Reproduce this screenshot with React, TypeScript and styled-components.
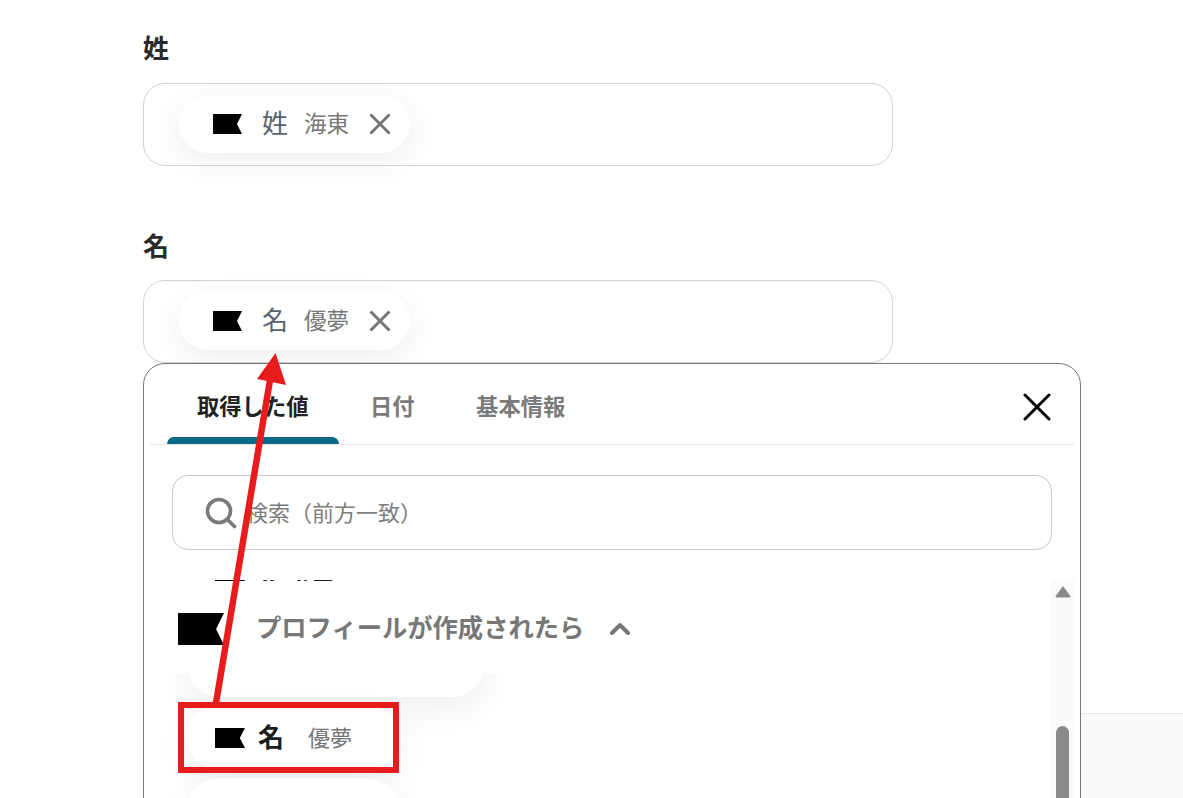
import React from "react";
import styled, { createGlobalStyle } from "styled-components";

const Global = createGlobalStyle`
  html, body { margin: 0; padding: 0; background: #fff; }
  body { font-family: "Noto Sans CJK JP", "Noto Sans", sans-serif; overflow: hidden; }
`;

const Page = styled.div`
  position: relative;
  width: 1183px;
  height: 798px;
  overflow: hidden;
  padding-left: 143px;
  box-sizing: border-box;
  background: #fff;
`;

const FooterBand = styled.div`
  position: absolute;
  left: 143px;
  right: 0;
  top: 713px;
  bottom: 0;
  background: #fafafa;
  border-top: 1px solid #e6e6e6;
`;

const Field = styled.section`
  position: relative;
  width: 750px;
`;

const Label = styled.div<{ $top: number; $after: number }>`
  padding-top: ${(p) => p.$top}px;
  height: 38px;
  font-size: 26px;
  line-height: 38px;
  font-weight: 700;
  color: #2a2a2a;
  margin-bottom: ${(p) => p.$after}px;
`;

const InputBox = styled.div`
  box-sizing: border-box;
  height: 83px;
  padding: 11px 0 0 35px;
  border: 1px solid #cfd2d8;
  border-radius: 22px;
  background: #fff;
`;

const Chip = styled.div`
  display: inline-flex;
  align-items: center;
  box-sizing: border-box;
  height: 58px;
  width: 231px;
  padding-left: 34px;
  border-radius: 29px;
  background: #fff;
  box-shadow: 0 8px 32px rgba(0, 0, 0, 0.07);
`;

const ChipLabel = styled.span`
  width: 26px;
  margin-left: 20px;
  margin-top: -4px;
  font-size: 26px;
  line-height: 1;
  color: #58626c;
`;

const ChipValue = styled.span`
  width: 45px;
  margin-left: 16px;
  margin-top: -4px;
  font-size: 22.5px;
  line-height: 1;
  white-space: nowrap;
  color: #777;
`;

const ChipClose = styled.svg`
  width: 24px;
  height: 24px;
  margin-left: 19px;
  stroke: #777;
  stroke-width: 3;
  fill: none;
`;

const Panel = styled.div`
  position: relative;
  z-index: 1;
  box-sizing: border-box;
  width: 938px;
  height: 520px;
  padding: 0 6px;
  display: flex;
  flex-direction: column;
  border: 1px solid #777;
  border-radius: 22px;
  background: #fff;
`;

const TabBar = styled.div`
  flex: none;
  height: 81px;
  box-sizing: border-box;
  padding-left: 17px;
  display: flex;
  align-items: stretch;
  border-bottom: 1px solid #e4e4e4;
`;

const Tab = styled.div<{ $active?: boolean }>`
  box-sizing: border-box;
  height: 80px;
  padding: 9px 30px 0;
  line-height: 64px;
  margin-right: 1.5px;
  font-size: 22.3px;
  font-weight: 700;
  white-space: nowrap;
  color: ${(p) => (p.$active ? "#222" : "#7a7a7a")};

  &::after {
    content: "";
    display: block;
    height: 7px;
    border-radius: 8px 8px 0 0;
    margin: 0 -30px;
    background: ${(p) => (p.$active ? "#0b6a85" : "transparent")};
  }
`;

const PanelClose = styled.svg`
  margin-left: auto;
  align-self: center;
  margin-right: 23px;
  margin-top: 6px;
  width: 28px;
  height: 28px;
  stroke: #000;
  stroke-width: 3;
  stroke-linecap: round;
  fill: none;
`;

const SearchBox = styled.div`
  flex: none;
  box-sizing: border-box;
  height: 75px;
  margin: 30px 22px 30px;
  padding-left: 32px;
  display: flex;
  align-items: center;
  border: 1px solid #c9c9c9;
  border-radius: 16px;
`;

const SearchIcon = styled.svg`
  width: 32px;
  height: 32px;
  stroke: #7a7a7a;
  stroke-width: 3.6;
  stroke-linecap: round;
  fill: none;
`;

const Placeholder = styled.span`
  margin-left: 9px;
  margin-top: -3px;
  font-size: 22px;
  color: #7d7d7d;
  white-space: nowrap;
`;

const ListRow = styled.div`
  flex: 1;
  min-height: 0;
  display: flex;
`;

const List = styled.div`
  position: relative;
  flex: 1;
  min-width: 0;
  overflow: hidden;
`;

const ChipStack = styled.div`
  display: flex;
  flex-direction: column;
  align-items: flex-start;
  gap: 8px;
  margin-top: -22.5px;
  padding-left: 37px;

  & > :first-child {
    margin-bottom: 1.5px;
  }
`;

const ListChip = styled.div<{ $width: number }>`
  flex: none;
  display: flex;
  align-items: center;
  box-sizing: border-box;
  height: 65px;
  width: ${(p) => p.$width}px;
  padding-left: 28px;
  border-radius: 32px;
  background: #fff;
  box-shadow: 0 10px 36px rgba(0, 0, 0, 0.07);
`;

const ListChipLabel = styled.span`
  margin-left: 13px;
  margin-top: -3px;
  font-size: 26px;
  line-height: 1;
  font-weight: 700;
  color: #1c1c1c;
  white-space: nowrap;
`;

const ListChipValue = styled.span`
  margin-left: 24px;
  margin-top: -3px;
  font-size: 22px;
  line-height: 1;
  color: #777;
  white-space: nowrap;
`;

const GroupHeader = styled.div`
  position: absolute;
  left: 0;
  right: 0;
  top: 1px;
  height: 93px;
  padding-left: 28px;
  display: flex;
  align-items: center;
  background: #fff;
`;

const GroupFlag = styled.span`
  display: flex;
  margin-top: 2px;
`;

const GroupTitle = styled.span`
  margin-left: 32px;
  margin-top: -3px;
  font-size: 25.3px;
  font-weight: 700;
  color: #777;
  white-space: nowrap;
`;

const Chevron = styled.svg`
  width: 24px;
  height: 16px;
  margin-left: 24px;
  margin-top: 1px;
  stroke: #777;
  stroke-width: 4;
  stroke-linecap: round;
  stroke-linejoin: round;
  fill: none;
`;

const ScrollTrack = styled.div`
  flex: none;
  width: 23px;
  background: #fafafa;
  display: flex;
  flex-direction: column;
  align-items: center;
  padding-top: 6px;
  box-sizing: border-box;
`;

const ScrollArrow = styled.svg`
  flex: none;
  width: 16px;
  height: 12px;
  fill: #8a8a8a;
  stroke: #8a8a8a;
  stroke-width: 2;
  stroke-linejoin: round;
`;

const ScrollThumb = styled.div`
  flex: none;
  width: 13px;
  height: 200px;
  margin-top: 128px;
  border-radius: 7px;
  background: #8a8a8a;
`;

const Annotation = styled.svg`
  position: absolute;
  inset: 0;
  z-index: 5;
  width: 1183px;
  height: 798px;
  pointer-events: none;
`;

const Flag = ({ w, h }: { w: number; h: number }) => (
  <svg width={w} height={h} viewBox="0 0 29 20" preserveAspectRatio="none" style={{ flex: "none" }}>
    <path d="M0 0H29L24 10L29 20H0Z" fill="#000" />
  </svg>
);

const Cross = () => (
  <ChipClose viewBox="0 0 24 24">
    <path d="M2.5 2.5L21.5 21.5M21.5 2.5L2.5 21.5" />
  </ChipClose>
);

const TagChip = ({ label, value }: { label: string; value: string }) => (
  <Chip>
    <Flag w={29} h={20} />
    <ChipLabel>{label}</ChipLabel>
    <ChipValue>{value}</ChipValue>
    <Cross />
  </Chip>
);

export default function App() {
  return (
    <Page>
      <Global />
      <FooterBand />
      <Field>
        <Label $top={28} $after={17}>姓</Label>
        <InputBox>
          <TagChip label="姓" value="海東" />
        </InputBox>
      </Field>
      <Field>
        <Label $top={60} $after={16}>名</Label>
        <InputBox>
          <TagChip label="名" value="優夢" />
        </InputBox>
      </Field>
      <Panel>
        <TabBar>
          <Tab $active>取得した値</Tab>
          <Tab>日付</Tab>
          <Tab>基本情報</Tab>
          <PanelClose viewBox="0 0 28 28">
            <path d="M2 2L26 26M26 2L2 26" />
          </PanelClose>
        </TabBar>
        <SearchBox>
          <SearchIcon viewBox="0 0 32 32">
            <circle cx="14" cy="14" r="11.5" />
            <path d="M23 23L29.5 29.5" />
          </SearchIcon>
          <Placeholder>検索（前方一致）</Placeholder>
        </SearchBox>
        <ListRow>
          <List>
            <ChipStack>
              <ListChip $width={212}>
                <Flag w={30} h={20} />
                <ListChipLabel>作成日</ListChipLabel>
              </ListChip>
              <ListChip $width={297} />
              <ListChip $width={212}>
                <Flag w={30} h={20} />
                <ListChipLabel>名</ListChipLabel>
                <ListChipValue>優夢</ListChipValue>
              </ListChip>
              <ListChip $width={212} />
            </ChipStack>
            <GroupHeader>
              <GroupFlag>
                <Flag w={46} h={32} />
              </GroupFlag>
              <GroupTitle>プロフィールが作成されたら</GroupTitle>
              <Chevron viewBox="0 0 24 16">
                <path d="M4 13L12 5L20 13" />
              </Chevron>
            </GroupHeader>
          </List>
          <ScrollTrack>
            <ScrollArrow viewBox="0 0 16 12">
              <path d="M8 1.5L14.5 10.5H1.5Z" />
            </ScrollArrow>
            <ScrollThumb />
          </ScrollTrack>
        </ListRow>
      </Panel>
      <Annotation viewBox="0 0 1183 798">
        <rect x="181" y="705" width="215" height="65" fill="none" stroke="#e81c1c" strokeWidth="6" />
        <path d="M216 703L270 380" stroke="#e81c1c" strokeWidth="6.5" fill="none" />
        <path d="M275.5 353L257 379L286 385Z" fill="#e81c1c" />
      </Annotation>
    </Page>
  );
}
